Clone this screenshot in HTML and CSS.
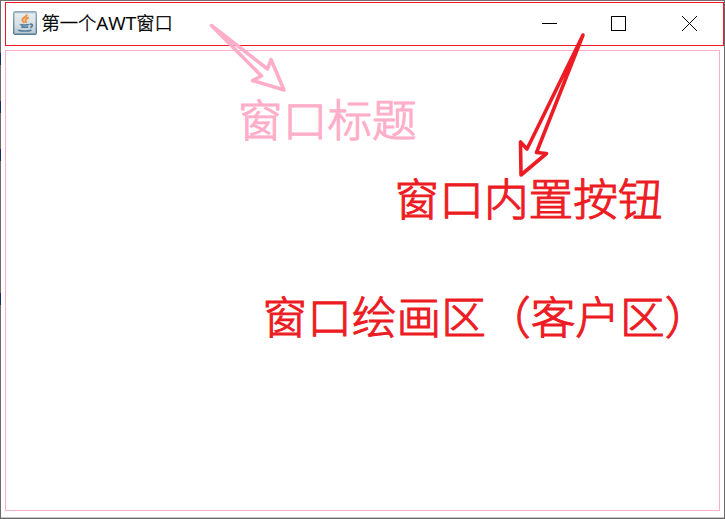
FILE: index.html
```html
<!DOCTYPE html>
<html lang="zh-CN">
<head>
<meta charset="utf-8">
<title>第一个AWT窗口</title>
<link rel="stylesheet" href="styles.css">
</head>
<body>
<div class="window">
  <header class="titlebar">
    <svg class="java-icon" width="24" height="24" viewBox="0 0 24 24">
      <defs>
        <linearGradient id="tile" x1="0" y1="0" x2="0" y2="1"><stop offset="0" stop-color="#b9cbd5"/><stop offset=".12" stop-color="#e6ecef"/><stop offset=".55" stop-color="#d7e0e6"/><stop offset="1" stop-color="#b4c5d1"/></linearGradient>
        <linearGradient id="rim" x1="0" y1="0" x2="0" y2="1"><stop offset="0" stop-color="#91a9b7"/><stop offset="1" stop-color="#58798f"/></linearGradient>
      </defs>
      <rect x=".7" y=".7" width="22.6" height="22.6" rx="1.6" fill="url(#tile)" stroke="url(#rim)" stroke-width="1.4"/>
      <path d="M13.600 3.300C14.600 6 8.500 6.800 9.500 9.300c.4 1 1.500 1.700 2 2.600M15.800 6.500c-2.300.9-3.700 1.900-3.200 3.100.4.900.9 1.300.2 2.400" fill="none" stroke="#ee9440" stroke-width="2"/>
      <path d="M7.300 13.300c0 .9 8 .9 8.800 0M8.300 15.600c1.700.7 5.700.7 7 .1M16.800 13.300c3.500-.7 3.400 2.300.4 3.300M5.500 18.800c-.5 1.500 10.500 1.600 13 .1" fill="none" stroke="#557f9f" stroke-width="1.700"/>
    </svg>
    <span class="title">第一个<span class="latin">AWT</span>窗口</span>
    <svg class="controls" width="158" height="16" viewBox="0 0 158 16" fill="none" stroke="#000">
      <path d="M1 8.500h15"/><rect x="70.500" y="1.500" width="14" height="14"/><path d="M141 1l15 15M156 1l-15 15"/>
    </svg>
  </header>
  <main class="client"></main>
</div>
<svg class="arrows" width="725" height="519" viewBox="0 0 725 519">
  <path fill="#1c2a62" d="M0 53h1v12H0zM0 101h1v12H0zM0 149h1v12H0zM0 293h1v12H0z"/>
  <path class="pink" d="M211.500 25.500L267.500 69L271 59.500L284 90L252.500 80.500L261.500 76Z"/>
  <path class="red" d="M583 35L527 149L520.500 142L521 175L546.500 153.500L536.500 152.500Z"/>
</svg>
<div class="note note-title">窗口标题</div>
<div class="note note-buttons">窗口内置按钮</div>
<div class="note note-client">窗口绘画区（客户区）</div>
</body>
</html>
```
FILE: styles.css
```css
* { box-sizing: border-box; }
body { margin: 0; background: #fff; }
.window {
  width: 725px;
  height: 519px;
  padding: 1px 0 0 4px;
  border: 1px solid #6b696a;
  border-top-color: #737172;
  box-shadow: inset 0 -1px #c4c4c4;
  display: flex;
  flex-direction: column;
  gap: 4px;
}
.titlebar {
  width: 719px;
  height: 44px;
  flex: none;
  border: 1px solid #ed1c24;
  display: flex;
  align-items: center;
  padding: 0 24px 0 7px;
}
.java-icon { flex: none; margin-top: -2px; }
.title {
  margin: -3px 0 0 4.500px;
  font: 300 18.300px/26px "Noto Sans CJK SC", sans-serif;
  -webkit-text-stroke: 0.4px #000;
  color: #000;
  white-space: nowrap;
}
.latin { font: 400 18.900px/26px "Open Sans", "Noto Sans", sans-serif; -webkit-text-stroke: 0.1px #000; }
.controls { margin: -3px 0 0 auto; }
.client {
  width: 715px;
  height: 461px;
  flex: none;
  border: 1px solid #ffaec9;
}
.arrows { position: absolute; left: 0; top: 0; fill: none; stroke-width: 3.6; stroke-linejoin: round; }
.pink { stroke: #ffaec9; }
.red { stroke: #ed1c24; }
.note {
  position: absolute;
  font: 300 44.700px/60px "Noto Sans CJK SC", sans-serif;
  color: #ed1c24;
  -webkit-text-stroke: 1.1px currentColor;
  white-space: nowrap;
}
.note-title { left: 238px; top: 88px; color: #ffaec9; }
.note-buttons { left: 394.500px; top: 167px; }
.note-client { left: 262.500px; top: 285px; }
```
